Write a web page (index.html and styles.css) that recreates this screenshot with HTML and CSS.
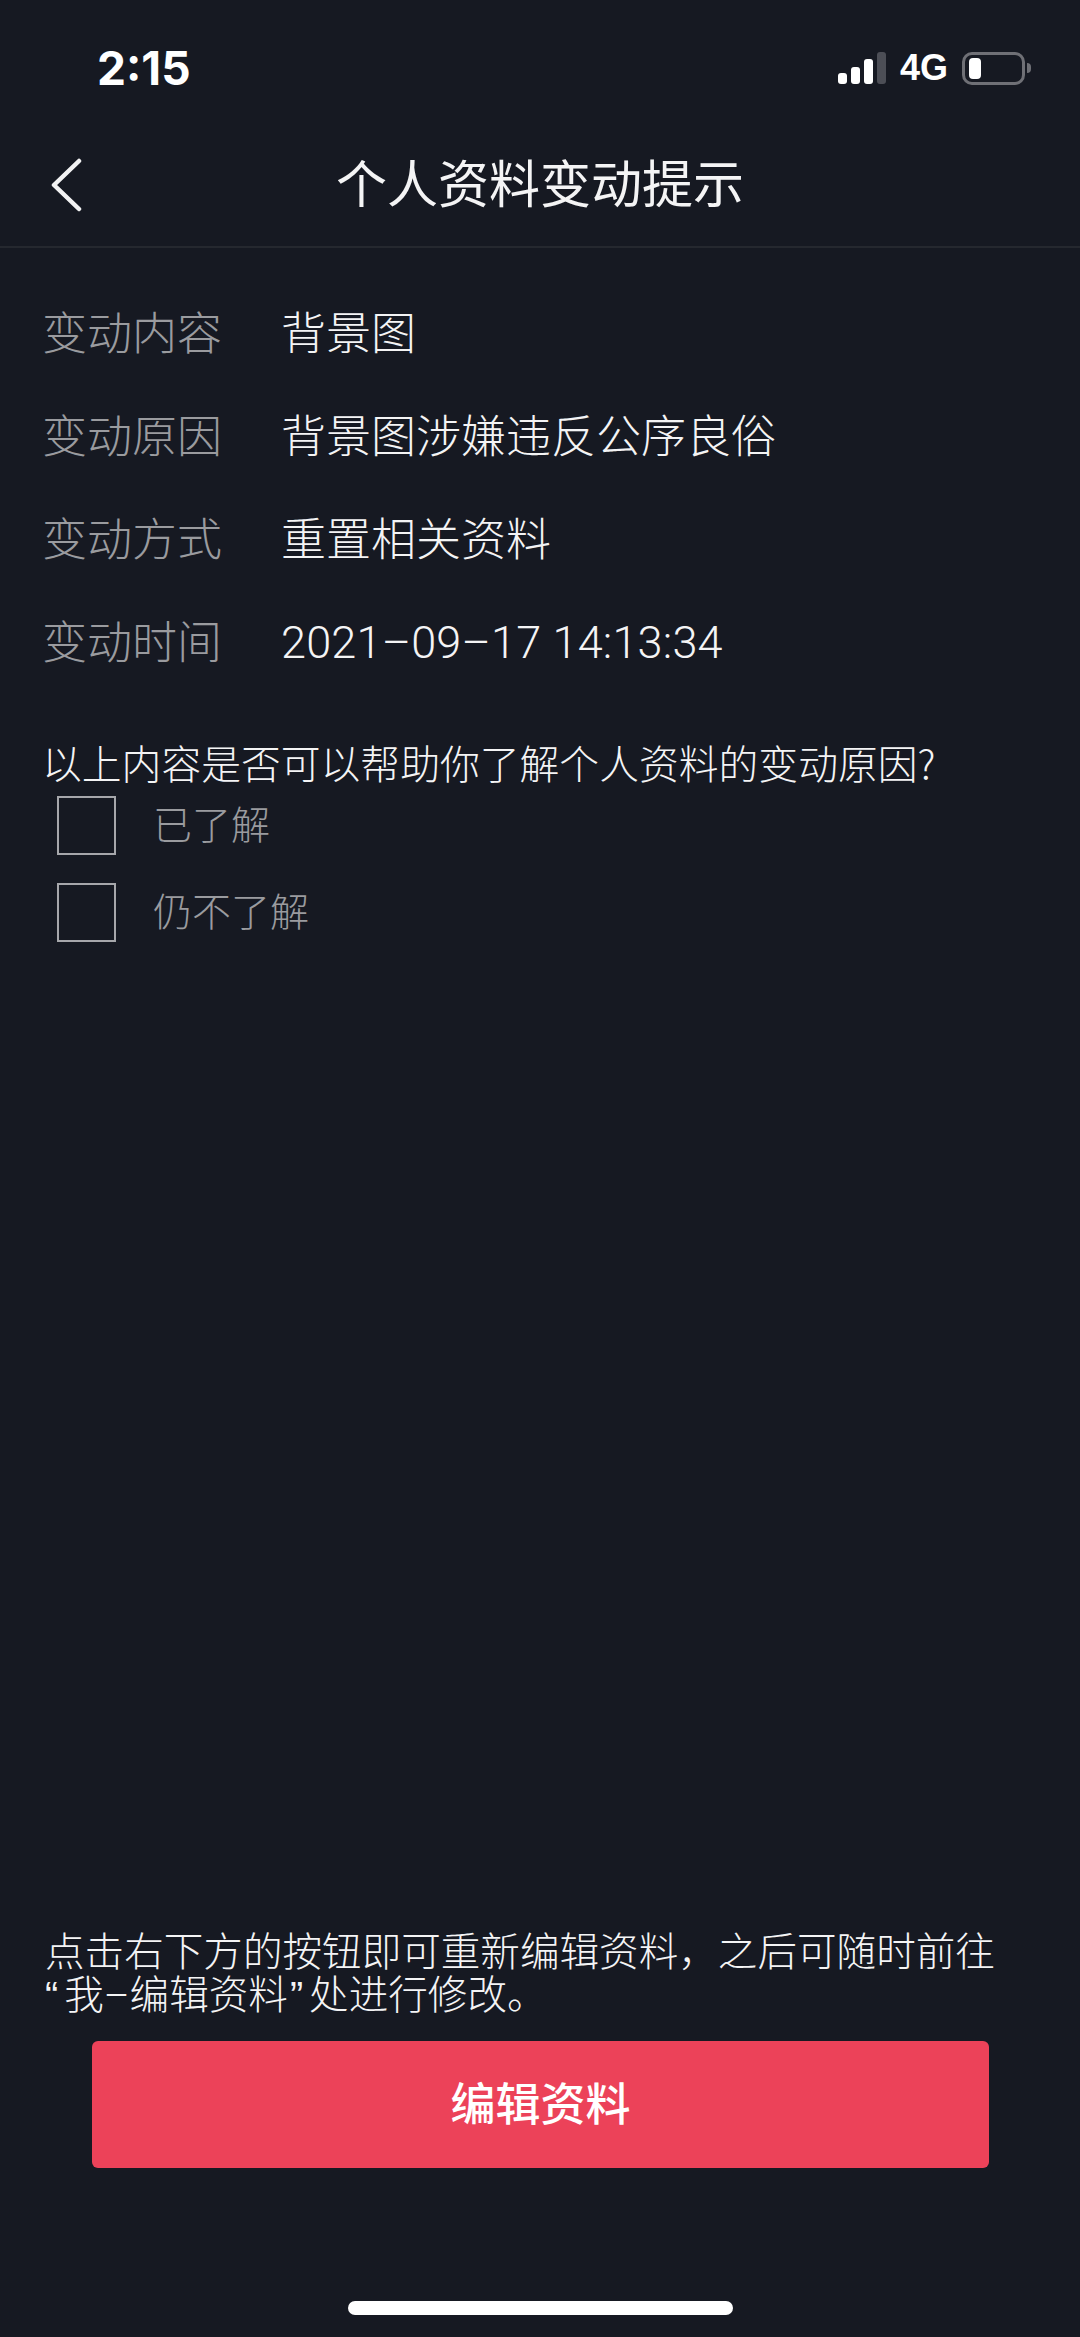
FILE: index.html
```html
<!DOCTYPE html>
<html lang="zh-CN">

<head>
    <meta charset="utf-8">
    <title>个人资料变动提示</title>
    <link rel="stylesheet" href="styles.css">
</head>

<body>
    <div class="page">
        <div class="status-bar">
            <span class="time">2:15</span>
            <div class="status-icons">
                <div class="signal">
                    <span class="bar bar-1"></span>
                    <span class="bar bar-2"></span>
                    <span class="bar bar-3"></span>
                    <span class="bar bar-4"></span>
                </div>
                <span class="network">4G</span>
                <div class="battery">
                    <div class="battery-body"><span class="battery-level"></span></div>
                    <span class="battery-nub"></span>
                </div>
            </div>
        </div>

        <div class="nav-bar">
            <svg class="back-icon" width="34" height="54" viewBox="0 0 34 54">
                <path d="M30 3 L5 27 L30 51" fill="none" stroke="#f2f2f3" stroke-width="4.5" stroke-linecap="round" stroke-linejoin="round" />
            </svg>
            <h1>个人资料变动提示</h1>
        </div>

        <div class="details">
            <div class="detail-row"><span class="label">变动内容</span><span class="value">背景图</span></div>
            <div class="detail-row"><span class="label">变动原因</span><span class="value">背景图涉嫌违反公序良俗</span></div>
            <div class="detail-row"><span class="label">变动方式</span><span class="value">重置相关资料</span></div>
            <div class="detail-row"><span class="label">变动时间</span><span class="value date">2021–09–17 14:13:34</span></div>
        </div>

        <div class="survey">
            <p class="question">以上内容是否可以帮助你了解个人资料的变动原因?</p>
            <div class="option"><span class="checkbox"></span><span class="option-text">已了解</span></div>
            <div class="option"><span class="checkbox"></span><span class="option-text">仍不了解</span></div>
        </div>

        <div class="footer">
            <p class="hint">点击右下方的按钮即可重新编辑资料，之后可随时前往<br><span class="quote open">“</span>我<span class="dash">–</span>编辑资料<span class="quote close">”</span>处进行修改。</p>
            <button class="edit-button">编辑资料</button>
            <div class="home-bar"></div>
        </div>
    </div>
</body>

</html>
```

FILE: styles.css
```css
* {
    box-sizing: border-box;
}

body {
    margin: 0;
    background-color: #161922;
    font-family: "Noto Sans CJK SC", "Noto Sans", sans-serif;
    color: #f4f4f5;
}

.page {
    display: flex;
    flex-direction: column;
    width: 1080px;
    height: 2337px;
    overflow: hidden;
}

.status-bar {
    display: flex;
    justify-content: space-between;
    align-items: center;
    height: 100px;
    padding: 36px 49px 0 97px;
    flex-shrink: 0;
}

.time {
    font-family: "Inter", sans-serif;
    font-size: 46px;
    font-weight: 700;
    color: #fff;
}

.status-icons {
    display: flex;
    align-items: center;
}

.signal {
    display: flex;
    align-items: flex-end;
    gap: 4px;
    height: 32px;
    margin-right: 14px;
}

.bar {
    width: 9px;
    background-color: #fff;
    border-radius: 3px;
}

.bar-1 { height: 11px; }
.bar-2 { height: 17px; }
.bar-3 { height: 25px; }
.bar-4 { height: 32px; background-color: #4c4e56; }

.network {
    font-family: "Liberation Sans", sans-serif;
    font-size: 36px;
    font-weight: bold;
    color: #fff;
    margin-right: 14px;
}

.battery {
    display: flex;
    align-items: center;
    gap: 2px;
}

.battery-body {
    display: flex;
    width: 63px;
    height: 33px;
    padding: 3px 4px;
    border: 3px solid #6f7076;
    border-radius: 10px;
}

.battery-level {
    width: 12px;
    background-color: #fff;
    border-radius: 4px;
}

.battery-nub {
    width: 4px;
    height: 10px;
    background-color: #6f7076;
    border-radius: 0 4px 4px 0;
}

.nav-bar {
    position: relative;
    display: flex;
    justify-content: center;
    align-items: center;
    height: 148px;
    border-bottom: 2px solid #25282f;
    flex-shrink: 0;
}

.nav-bar h1 {
    margin: 16px 0 0;
    font-size: 51px;
    font-weight: 400;
    line-height: 70px;
}

.back-icon {
    position: absolute;
    left: 49px;
    top: 58px;
}

.details {
    display: flex;
    flex-direction: column;
    padding: 31px 0 0 42px;
}

.detail-row {
    display: flex;
    align-items: center;
    height: 103px;
    font-size: 45px;
}

.label {
    width: 239px;
    color: #9a9b9f;
    font-weight: 300;
}

.value {
    font-weight: 300;
}

.date {
    padding-top: 5px;
    font-family: "Roboto", sans-serif;
    font-size: 45px;
    font-weight: 300;
    letter-spacing: 0.2px;
}

.survey {
    display: flex;
    flex-direction: column;
    padding: 51px 0 0 42px;
}

.question {
    margin: 0;
    font-size: 39.8px;
    font-weight: 300;
    line-height: 40px;
}

.option {
    display: flex;
    align-items: center;
    gap: 37px;
    height: 87px;
    margin-left: 15px;
    font-size: 39px;
    font-weight: 300;
    color: #9a9b9f;
}

.option-text {
    padding-bottom: 8px;
}

.checkbox {
    width: 59px;
    height: 59px;
    border: 2px solid #a6a7ab;
}

.footer {
    display: flex;
    flex-direction: column;
    margin-top: auto;
}

.hint {
    margin: 0 0 24px;
    padding-left: 45px;
    font-size: 39.6px;
    font-weight: 300;
    line-height: 43px;
}

.quote {
    font-family: "Liberation Sans", sans-serif;
}

.quote.open {
    margin-right: 6px;
}

.quote.close {
    margin: 0 6px 0 2px;
}

.dash {
    font-family: "Roboto", sans-serif;
    font-weight: 300;
}

.edit-button {
    width: 897px;
    height: 127px;
    margin: 0 0 0 92px;
    padding: 0 0 6px;
    border: 0;
    border-radius: 6px;
    background-color: #ec4259;
    color: #fff;
    font-family: inherit;
    font-size: 45px;
    font-weight: 500;
}

.home-bar {
    width: 385px;
    height: 14px;
    margin: 133px 0 22px 348px;
    background-color: #fff;
    border-radius: 7px;
}
```
